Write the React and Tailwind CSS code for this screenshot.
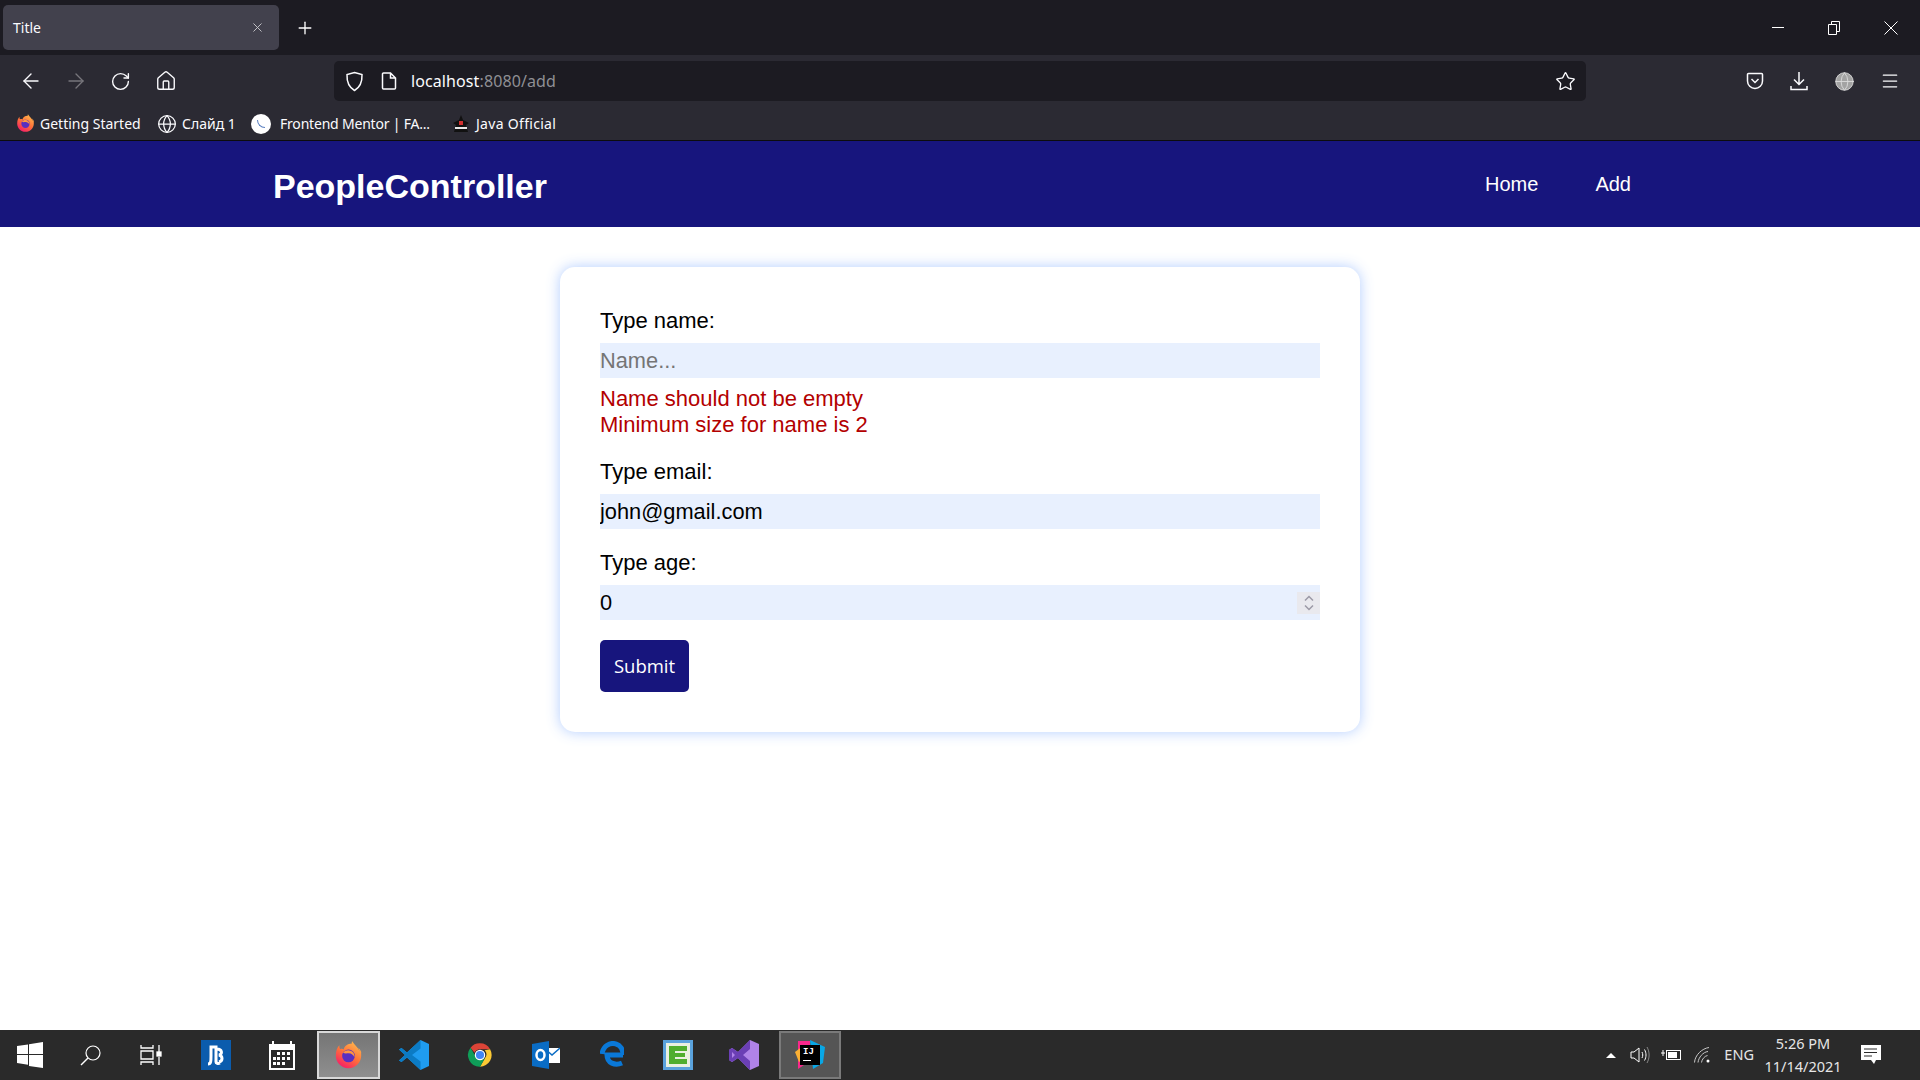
import { ArrowLeft, ArrowRight, RotateCw, Home, Star, Menu, Plus, X, Globe } from 'lucide-react';

const chromeFont = { fontFamily: '"Noto Sans", sans-serif' };

function FirefoxIcon({ size = 18 }) {
  return (
    <svg width={size} height={size} viewBox="0 0 32 32">
      <defs>
        <linearGradient id="ff" x1="0.8" y1="0" x2="0.2" y2="1">
          <stop offset="0" stopColor="#ffbd4f" />
          <stop offset="0.5" stopColor="#ff7139" />
          <stop offset="1" stopColor="#f5156c" />
        </linearGradient>
      </defs>
      <path d="M30 12c-.7-1.700-2-3.600-3.200-4.300.8 1.500 1.300 3 1.500 4-2-5-5.400-7-8.200-11.400-.4.600-.6 1.600-.3 2.500C15 3 11.500 5.300 10.800 9.300 9.300 8.400 8 8.500 6.800 9 5.900 7.900 5.800 6 6 4.800 3.500 7 2 11 2 16c0 8 6.300 14 14 14s14-6 14-14c0-1.400-.2-2.800 0-4z" fill="url(#ff)" />
      <circle cx="16" cy="16.500" r="7" fill="#5b2fc0" />
      <path d="M10 13c2-3 6-3.500 9-2 2.500 1.300 4 4 3.500 7-1-3-4-5-7-4.500-2 .3-4 .3-5.500-.5z" fill="#ff9640" />
    </svg>
  );
}

function ChromeIcon() {
  return (
    <svg width="28" height="28" viewBox="0 0 48 48">
      <path d="M24 4a20 20 0 0 1 17.300 10H24a10 10 0 0 0-9.300 6.300L7.800 11.500A20 20 0 0 1 24 4z" fill="#db4437" />
      <path d="M41.300 14A20 20 0 0 1 24 44l8.700-15A10 10 0 0 0 32 16z" fill="#fcc934" />
      <path d="M24 44A20 20 0 0 1 7.800 11.500l8.600 14.900A10 10 0 0 0 32.700 29L24 44z" fill="#0f9d58" />
      <circle cx="24" cy="24" r="9" fill="#fff" />
      <circle cx="24" cy="24" r="7" fill="#4285f4" />
    </svg>
  );
}

function TaskIcon({ active, open, children }) {
  let cls = 'flex items-center justify-center ';
  if (active) cls += 'border-2 border-[#d8d8d8] bg-gradient-to-b from-[#757575] to-[#8f8f8f] ml-[2px] mr-[1px] w-[63px] h-[48px]';
  else if (open) cls += 'border-2 border-[#7a7a7a] bg-[#555555] mx-[2px] w-[62px] h-[48px]';
  else cls += 'w-[66px] h-full';
  return <div className={cls}>{children}</div>;
}

function Field({ label, children }) {
  return (
    <div className="mb-5">
      <label className="block mb-[9px] text-[22px] leading-[27px] text-black">{label}</label>
      {children}
    </div>
  );
}

export default function App() {
  return (
    <div className="h-screen w-full flex flex-col bg-white overflow-hidden" style={{ fontFamily: '"Liberation Sans", Arial, sans-serif' }}>
      {/* Browser tab bar */}
      <div className="h-[55px] shrink-0 bg-[#1c1b22] flex items-center pl-[3px] text-white" style={chromeFont}>
        <div className="w-[276px] h-[45px] bg-[#42414d] rounded-[5px] flex items-center justify-between pl-[10px] pr-[14px]">
          <span className="text-[14px] text-[#fbfbfe]">Title</span>
          <X size={15} strokeWidth={1.5} className="text-[#c8c8cc]" />
        </div>
        <Plus size={20} strokeWidth={1.6} className="ml-4" />
        <div className="ml-auto flex items-center">
          <div className="w-[56px] flex justify-center"><span className="block w-[12px] h-px bg-white"></span></div>
          <div className="w-[56px] flex justify-center">
            <svg width="12" height="14" viewBox="0 0 12 14" fill="none" stroke="#fff">
              <path d="M.5 3.500h8v10h-8zM3.500 3.500v-3h8v10h-3" />
            </svg>
          </div>
          <div className="w-[58px] flex justify-center">
            <svg width="14" height="14" viewBox="0 0 14 14" fill="none" stroke="#fff">
              <path d="M.5.500l13 13M13.500.500l-13 13" />
            </svg>
          </div>
        </div>
      </div>

      {/* Toolbar */}
      <div className="h-[52px] shrink-0 bg-[#2b2a33] flex items-center text-[#fbfbfe]" style={chromeFont}>
        <div className="flex items-center w-[334px] pl-[8px]">
          <div className="w-[45px] flex justify-center"><ArrowLeft size={24} strokeWidth={1.4} /></div>
          <div className="w-[45px] flex justify-center"><ArrowRight size={24} strokeWidth={1.4} className="text-[#77767c]" /></div>
          <div className="w-[45px] flex justify-center"><RotateCw size={21} strokeWidth={1.6} /></div>
          <div className="w-[45px] flex justify-center"><Home size={22} strokeWidth={1.5} /></div>
        </div>
        <div className="w-[1252px] h-[40px] bg-[#1c1b22] rounded-[5px] flex items-center pl-[11px] pr-[10px]">
          <svg width="19" height="21" viewBox="0 0 19 21" fill="none" stroke="#fbfbfe" strokeWidth="1.500">
            <path d="M9.500 1.500l7.500 2c.3 7-1.500 12.500-7.500 16-6-3.500-7.800-9-7.500-16z" />
          </svg>
          <svg width="16" height="18" viewBox="0 0 16 18" fill="none" stroke="#fbfbfe" strokeWidth="1.500" className="ml-[17px]">
            <path d="M2.500 1h7l5 5v10a1 1 0 0 1-1 1h-11a1 1 0 0 1-1-1V2a1 1 0 0 1 1-1zM9.500 1v5h5" />
          </svg>
          <span className="ml-[14px] text-[16px] tracking-[0.1px] text-[#fbfbfe]">localhost<span className="text-[#8f8f94]">:8080/add</span></span>
          <Star size={21} strokeWidth={1.5} className="ml-auto" />
        </div>
        <div className="flex items-center ml-auto pr-[20px] gap-[26px]">
          <svg width="18" height="18" viewBox="0 0 18 18" fill="none" stroke="#fbfbfe" strokeWidth="1.500" className="ml-[1px]">
            <path d="M2.500 1.500h13a1 1 0 0 1 1 1V9a7.500 7.500 0 0 1-15 0V2.500a1 1 0 0 1 1-1zM5.500 7l3.500 3.500L12.500 7" />
          </svg>
          <svg width="18" height="20" viewBox="0 0 18 20" fill="none" stroke="#fbfbfe" strokeWidth="1.500">
            <path d="M9 1v12M4 8.500L9 13.500l5-5M1 15v3.500h16V15" />
          </svg>
          <Globe size={21} strokeWidth={1} className="fill-[#a3a3a3] text-[#ddd]" />
          <Menu size={20} strokeWidth={1.5} className="-ml-[1px]" />
        </div>
      </div>

      {/* Bookmarks */}
      <div className="h-[34px] shrink-0 bg-[#2b2a33] flex items-center text-[14px] text-[#fbfbfe] border-b border-[#0c0c0d]" style={chromeFont}>
        <div className="ml-[16px] flex"><FirefoxIcon size={19} /></div>
        <span className="ml-[5px] w-[102px] whitespace-nowrap">Getting Started</span>
        <Globe size={20} strokeWidth={1.5} className="ml-[15px]" />
        <span className="ml-[5px] w-[54px] whitespace-nowrap">Слайд 1</span>
        <div className="ml-[15px] w-[20px] h-[20px] rounded-full bg-white flex items-center justify-center">
          <span className="block w-[8px] h-[8px] rounded-bl-full border-l border-b border-[#5a7fc0]"></span>
        </div>
        <span className="ml-[9px] w-[151px] whitespace-nowrap tracking-[-0.2px]">Frontend Mentor | FA...</span>
        <svg width="20" height="18" viewBox="0 0 20 18" className="ml-[20px]">
          <path d="M10 0l2 5 6 3-3 2 2 7H3l2-7-3-2 6-3z" fill="#111" />
          <rect x="8" y="6" width="4" height="4" fill="#d03030" />
          <rect x="4" y="12" width="12" height="2" fill="#e8e8e8" />
        </svg>
        <span className="ml-[5px] whitespace-nowrap tracking-[0.3px]">Java Official</span>
      </div>

      {/* Site header */}
      <header className="h-[86px] shrink-0 bg-[#17157d] flex items-center text-white">
        <a className="ml-[273px] pt-[3px] text-[34px] font-bold leading-none">PeopleController</a>
        <nav className="ml-auto mr-[289px] flex gap-[57px] text-[20px]">
          <a>Home</a>
          <a>Add</a>
        </nav>
      </header>

      {/* Form */}
      <main className="flex-1 min-h-0 pt-10">
        <form className="w-[800px] mx-auto bg-white rounded-[15px] p-10 shadow-[0_0_14px_rgba(170,200,255,0.9)]">
          <Field label="Type name:">
            <input
              placeholder="Name..."
              className="block w-full h-[35px] bg-[#e8f0fe] text-[21.8px] text-black outline-none placeholder:text-[#757575]"
            />
            <div className="mt-2 text-[22px] leading-[26px] text-[#b30000]">
              <div>Name should not be empty</div>
              <div>Minimum size for name is 2</div>
            </div>
          </Field>
          <Field label="Type email:">
            <input
              defaultValue="john@gmail.com"
              className="block w-full h-[35px] bg-[#e8f0fe] text-[21.8px] text-black outline-none"
            />
          </Field>
          <Field label="Type age:">
            <div className="relative">
              <input
                defaultValue="0"
                className="block w-full h-[35px] bg-[#e8f0fe] text-[21.8px] text-black outline-none"
              />
              <div className="absolute right-0 top-[7px] w-[23px] h-[22px] bg-[#e9e9ee] flex items-center justify-center">
                <svg width="10" height="16" viewBox="0 0 10 16" fill="none" stroke="#9b99a6" strokeWidth="1.500">
                  <path d="M1 5.500l4-4 4 4M1 10.500l4 4 4-4" />
                </svg>
              </div>
            </div>
          </Field>
          <button
            type="button"
            className="block w-[89px] h-[52px] bg-[#17157d] text-white text-[18.500px] rounded-[5px]"
            style={{ fontFamily: '"Open Sans", sans-serif' }}
          >
            Submit
          </button>
        </form>
      </main>

      {/* Windows taskbar */}
      <div className="h-[50px] shrink-0 bg-[#2a2a2a] flex items-center text-white" style={chromeFont}>
        <div className="w-[60px] flex justify-center">
          <svg width="26" height="26" viewBox="0 0 26 26" fill="#fff">
            <path d="M0 4l11-1.500V12H0zM12 2.300L26 0v12H12zM0 13h11v9.700L0 21zM12 13h14v13l-14-2z" />
          </svg>
        </div>
        <div className="w-[60px] flex justify-center">
          <svg width="21" height="21" viewBox="0 0 21 21" fill="none" stroke="#fff" strokeWidth="1.200">
            <circle cx="13" cy="8" r="7" />
            <path d="M8 13L1 20" strokeWidth="1.500" />
          </svg>
        </div>
        <div className="w-[63px] flex justify-start pl-[20px]">
          <svg width="22" height="20" viewBox="0 0 22 20" fill="none" stroke="#fff" strokeWidth="1.300">
            <path d="M1 0v3h12V0M1 6h12v8H1zM1 20v-3h12v3M19 0v7M19 12v8" />
            <rect x="17" y="7" width="4" height="4" fill="#fff" />
          </svg>
        </div>
        <div className="flex items-center h-full">
          <TaskIcon>
            <div className="w-[30px] h-[30px] bg-[#0b5cad] flex items-center justify-center">
              <svg width="20" height="22" viewBox="0 0 20 22" fill="none" stroke="#fff" strokeWidth="3">
                <path d="M2 20c3 0 3-3 3-8V3h5v15c0 1 2 2 4 1M11 5c5 0 6 5 2 6 4 1 4 6 0 7" />
              </svg>
            </div>
          </TaskIcon>
          <TaskIcon>
            <svg width="26" height="30" viewBox="0 0 26 30">
              <path d="M0 4h3V1h2v3h16V1h2v3h3v26H0z" fill="#fff" />
              <rect x="2" y="10" width="22" height="18" fill="#2a2a2a" />
              <g fill="#fff">
                <rect x="8" y="12" width="3" height="3" /><rect x="13" y="12" width="3" height="3" /><rect x="18" y="12" width="3" height="3" />
                <rect x="4" y="17" width="3" height="3" /><rect x="8" y="17" width="3" height="3" /><rect x="13" y="17" width="3" height="3" /><rect x="18" y="17" width="3" height="3" />
                <rect x="4" y="22" width="3" height="3" /><rect x="8" y="22" width="3" height="3" /><rect x="13" y="22" width="3" height="3" />
              </g>
            </svg>
          </TaskIcon>
          <TaskIcon active><FirefoxIcon size={29} /></TaskIcon>
          <TaskIcon>
            <svg width="30" height="30" viewBox="0 0 30 30">
              <path d="M21.500 0L30 4v22l-8.500 4L8 17.500 2.500 22 0 20.500 6 15 0 9.500 2.500 8 8 12.500z" fill="#1f9cf0" />
              <path d="M21.500 0v8.500L13 15l8.500 6.500V30L8 17.500 2.500 22 0 20.500 6 15 0 9.500 2.500 8 8 12.500z" fill="#0b7bc4" />
            </svg>
          </TaskIcon>
          <TaskIcon><ChromeIcon /></TaskIcon>
          <TaskIcon>
            <svg width="28" height="28" viewBox="0 0 28 28">
              <rect x="12" y="7" width="16" height="15" fill="#fff" />
              <path d="M12 7l8 7 8-7" fill="none" stroke="#0a6cc4" strokeWidth="1.500" />
              <path d="M0 3l17-3v28L0 25z" fill="#0a6cc4" />
              <ellipse cx="8.500" cy="14" rx="4" ry="5" fill="none" stroke="#fff" strokeWidth="2.500" />
            </svg>
          </TaskIcon>
          <TaskIcon>
            <svg width="24" height="28" viewBox="0 0 24 28" fill="none" stroke="#0a78d7" strokeWidth="5">
              <path d="M23 14H7c0 8 8 11 15 8M2 13C3 5 10 1 16 3c4 1 7 5 7 11" />
            </svg>
          </TaskIcon>
          <TaskIcon>
            <div className="w-[30px] h-[30px] bg-[#5aa2dc] flex items-center justify-center">
              <div className="w-[24px] h-[24px] bg-[#e9f0e0] flex items-center justify-center">
                <svg width="20" height="20" viewBox="0 0 20 20" fill="#4fae2e">
                  <path d="M1 1h18v5H7v2h10v4H7v2h12v5H1z" />
                </svg>
              </div>
            </div>
          </TaskIcon>
          <TaskIcon>
            <svg width="30" height="30" viewBox="0 0 30 30">
              <path d="M21 0l9 4v22l-9 4-12-12-6 4-3-2V10l3-2 6 4z" fill="#b083e8" />
              <path d="M21 0v9l-7 6 7 6v9L9 18l-6 4-3-2V10l3-2 6 4zM3 12v6l3-3z" fill="#6b3fb5" />
            </svg>
          </TaskIcon>
          <TaskIcon open>
            <div className="relative w-[30px] h-[30px]">
              <svg width="30" height="30" viewBox="0 0 30 30" className="absolute inset-0">
                <path d="M3 1l12 0 0 20-12 8z" fill="#f9278c" />
                <path d="M15 0l15 7-2 16-10 6z" fill="#08a7e6" />
                <path d="M0 12l8-6 6 10-10 6z" fill="#fbb034" />
              </svg>
              <div className="absolute left-[5px] top-[5px] w-[20px] h-[20px] bg-black text-white text-[9px] font-bold leading-[10px] pl-[3px] pt-[2px]" style={{ fontFamily: '"Liberation Mono", monospace' }}>
                IJ
                <div className="w-[8px] h-[1px] bg-white mt-[3px]"></div>
              </div>
            </div>
          </TaskIcon>
        </div>

        {/* Tray */}
        <div className="ml-auto flex items-center">
          <svg width="10" height="6" viewBox="0 0 10 6" fill="#fff"><path d="M0 6l5-5 5 5z" /></svg>
          <svg width="20" height="20" viewBox="0 0 20 20" fill="none" stroke="#fff" strokeWidth="1" className="ml-[14px]">
            <path d="M1 7h3l5-4v14l-5-4H1zM12 7c1 2 1 4 0 6M14.500 4.500c2 3.500 2 7.500 0 11" />
            <path d="M17 2c2.800 5 2.800 11 0 16" stroke="#888" />
          </svg>
          <svg width="20" height="12" viewBox="0 0 20 12" fill="none" stroke="#fff" className="ml-[11px]">
            <rect x="5.500" y="1.500" width="14" height="9" />
            <rect x="7" y="3" width="9" height="6" fill="#fff" stroke="none" />
            <path d="M0 4h4M2 1v6" />
          </svg>
          <svg width="16" height="16" viewBox="0 0 16 16" fill="none" stroke="#c8c8c8" className="ml-[13px]">
            <path d="M.5 15.500C1 8 8 1.500 15 .5M4 15.500C4.500 10.500 9 5 14 4.500M7.500 15.500c.3-3 3-6.500 6-7" />
            <circle cx="14" cy="14" r="1.500" fill="#fff" stroke="none" />
          </svg>
          <span className="ml-[14px] text-[14.500px] text-[#e6e6e6]">ENG</span>
          <div className="ml-[10px] w-[78px] text-center text-[14.500px] leading-[23px] text-[#e6e6e6] whitespace-nowrap">
            <div>5:26 PM</div>
            <div>11/14/2021</div>
          </div>
          <svg width="20" height="20" viewBox="0 0 20 20" className="ml-[19px] mr-[39px]">
            <path d="M0 0h20v15h-5l-2 4-3-4H0z" fill="#fff" />
            <path d="M3 4h13M3 7.500h13M3 11h8" stroke="#2a2a2a" />
          </svg>
        </div>
      </div>
    </div>
  );
}
